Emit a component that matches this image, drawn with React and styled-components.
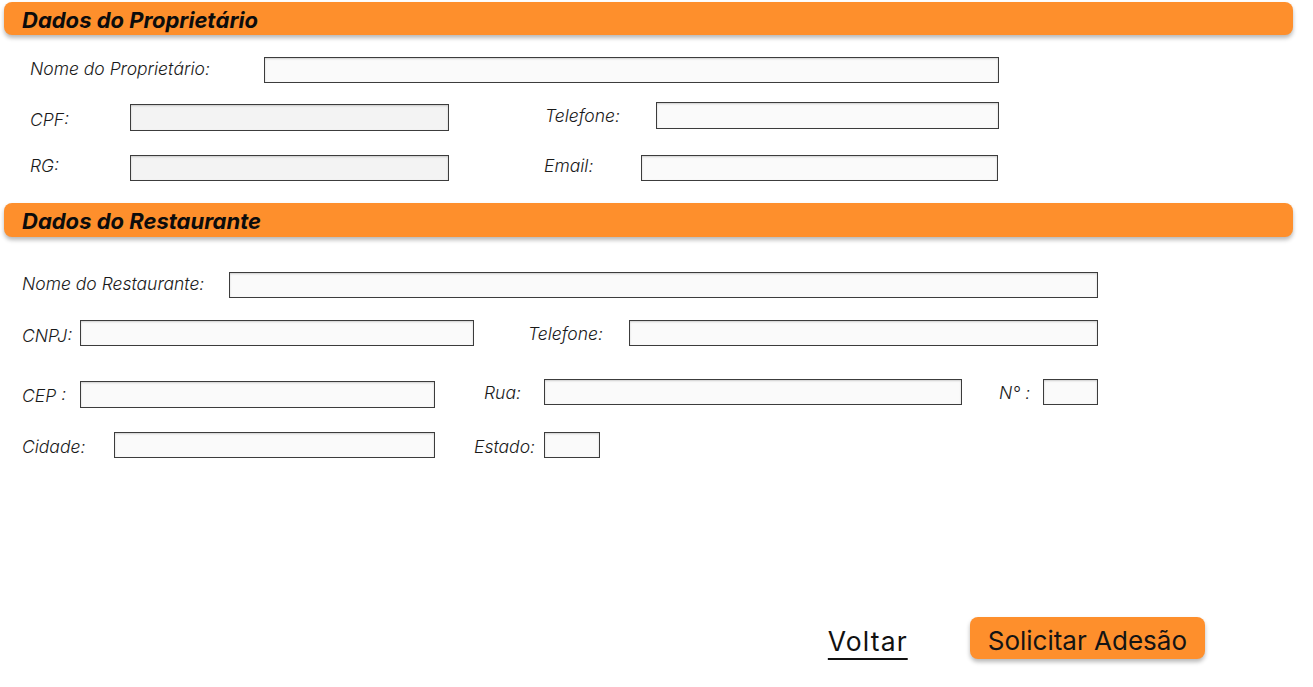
import React from "react";
import styled, { createGlobalStyle } from "styled-components";

const Global = createGlobalStyle`
  html, body { margin: 0; padding: 0; background: #ffffff; }
  body { font-family: Inter, "Noto Sans", "Liberation Sans", sans-serif; color: #161616; }
  * { box-sizing: border-box; }
`;

const Page = styled.div`
  width: 1313px;
  min-height: 687px;
  padding-top: 2px;
  display: flex;
  flex-direction: column;
`;

const Header = styled.div`
  margin: ${(p) => p.$top || 0}px 20px 0 4px;
  height: ${(p) => p.$h || 33}px;
  background: #fe8f2c;
  border-radius: 8px;
  box-shadow: 0 3px 4px rgba(0, 0, 0, 0.28);
  display: flex;
  align-items: center;
  padding-left: 18px;
`;

const Title = styled.h2`
  margin: 0;
  font-size: 22px;
  font-weight: 700;
  font-style: italic;
  color: #0c0c0c;
  transform: translateY(1px);
`;

const Section = styled.div`
  display: flex;
  flex-direction: column;
  padding-left: ${(p) => p.$pad}px;
`;

const Row = styled.div`
  display: flex;
  align-items: flex-start;
  margin-top: ${(p) => p.$top}px;
`;

const Field = styled.div`
  display: flex;
  align-items: center;
  margin-left: ${(p) => p.$ml || 0}px;
  margin-top: ${(p) => p.$dy || 0}px;
`;

const Label = styled.label`
  width: ${(p) => p.$w}px;
  flex: none;
  font-size: 17.5px;
  font-weight: 300;
  font-style: italic;
  color: #1a1a1a;
  white-space: nowrap;
  transform: translateY(${(p) => p.$ly || 0}px);
`;

const Input = styled.div`
  width: ${(p) => p.$w}px;
  height: ${(p) => p.$h || 26}px;
  flex: none;
  border: 1px solid #3c3c3c;
  background: ${(p) => (p.$tone === "gray" ? "#f3f3f3" : "#fafafa")};
  box-shadow: inset 0 1px 2px rgba(0, 0, 0, 0.18);
`;

const Footer = styled.div`
  display: flex;
  justify-content: flex-end;
  align-items: center;
  gap: 62px;
  padding-right: 108px;
  margin-top: 159px;
`;

const BackLink = styled.a`
  font-size: 26.5px;
  font-weight: 400;
  letter-spacing: 1.1px;
  color: #111111;
  text-decoration: underline;
  text-decoration-thickness: 2px;
  text-underline-offset: 7px;
  cursor: pointer;
  margin-top: 6px;
`;

const Submit = styled.button`
  height: 42px;
  padding: 4px 18px 0;
  border: none;
  border-radius: 8px;
  background: #fe8f2c;
  box-shadow: 0 3px 4px rgba(0, 0, 0, 0.28);
  font-family: Inter, "Noto Sans", sans-serif;
  font-size: 26px;
  font-weight: 400;
  color: #141414;
  cursor: pointer;
`;

export default function App() {
  return (
    <Page>
      <Global />
      <Header $h={33}>
        <Title>Dados do Proprietário</Title>
      </Header>
      <Section $pad={30}>
        <Row $top={22}>
          <Field>
            <Label $w={234} $ly={-2}>Nome do Proprietário:</Label>
            <Input $w={735} />
          </Field>
        </Row>
        <Row $top={19}>
          <Field $dy={2}>
            <Label $w={100} $ly={2}>CPF:</Label>
            <Input $w={319} $h={27} $tone="gray" />
          </Field>
          <Field $ml={96}>
            <Label $w={111}>Telefone:</Label>
            <Input $w={343} $h={27} />
          </Field>
        </Row>
        <Row $top={24}>
          <Field>
            <Label $w={100} $ly={-3}>RG:</Label>
            <Input $w={319} $tone="gray" />
          </Field>
          <Field $ml={95}>
            <Label $w={97} $ly={-3}>Email:</Label>
            <Input $w={357} />
          </Field>
        </Row>
      </Section>
      <Header $top={22} $h={34}>
        <Title>Dados do Restaurante</Title>
      </Header>
      <Section $pad={22}>
        <Row $top={35}>
          <Field>
            <Label $w={207} $ly={-2}>Nome do Restaurante:</Label>
            <Input $w={869} />
          </Field>
        </Row>
        <Row $top={22}>
          <Field>
            <Label $w={58} $ly={2}>CNPJ:</Label>
            <Input $w={394} />
          </Field>
          <Field $ml={54}>
            <Label $w={101}>Telefone:</Label>
            <Input $w={469} />
          </Field>
        </Row>
        <Row $top={33}>
          <Field $dy={2}>
            <Label $w={58} $ly={1}>CEP :</Label>
            <Input $w={355} $h={27} />
          </Field>
          <Field $ml={49}>
            <Label $w={60}>Rua:</Label>
            <Input $w={418} />
          </Field>
          <Field $ml={37}>
            <Label $w={44}>N° :</Label>
            <Input $w={55} />
          </Field>
        </Row>
        <Row $top={24}>
          <Field>
            <Label $w={92} $ly={1}>Cidade:</Label>
            <Input $w={321} />
          </Field>
          <Field $ml={39}>
            <Label $w={70} $ly={1}>Estado:</Label>
            <Input $w={56} />
          </Field>
        </Row>
      </Section>
      <Footer>
        <BackLink>Voltar</BackLink>
        <Submit>Solicitar Adesão</Submit>
      </Footer>
    </Page>
  );
}
